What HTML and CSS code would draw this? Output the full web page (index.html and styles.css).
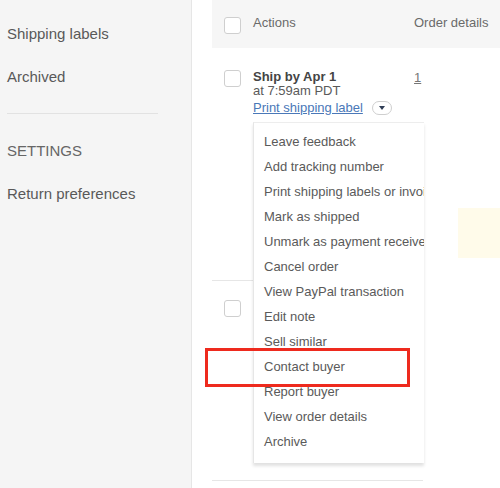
FILE: index.html
```html
<!DOCTYPE html>
<html lang="en">
<head>
  <meta charset="UTF-8" />
  <title>Orders</title>
  <link rel="stylesheet" href="styles.css">
</head>
<body>

<aside class="sidebar">
  <a class="side-link" href="#">Shipping labels</a>
  <a class="side-link" href="#">Archived</a>
  <hr class="side-divider">
  <div class="side-heading">SETTINGS</div>
  <a class="side-link" href="#">Return preferences</a>
</aside>

<main class="orders">
  <div class="orders-head">
    <span class="cell-check"><span class="checkbox"></span></span>
    <span class="cell-actions">Actions</span>
    <span class="cell-details">Order details</span>
  </div>

  <div class="order-row">
    <span class="cell-check"><span class="checkbox"></span></span>
    <div class="cell-actions">
      <div class="ship-by">Ship by Apr 1</div>
      <div class="ship-time">at 7:59am PDT</div>
      <div class="label-line">
        <a class="label-link" href="#">Print shipping label</a>
        <button class="caret-btn"><span class="caret"></span></button>
      </div>
    </div>
    <div class="cell-details"><a class="order-num" href="#">1</a></div>
  </div>

  <div class="order-row">
    <span class="cell-check"><span class="checkbox"></span></span>
    <div class="cell-actions"></div>
    <div class="cell-details"></div>
  </div>

  <div class="note"></div>

  <!-- actions menu opened from the caret -->
  <ul class="menu">
    <li>Leave feedback</li>
    <li>Add tracking number</li>
    <li>Print shipping labels or invoices</li>
    <li>Mark as shipped</li>
    <li>Unmark as payment received</li>
    <li>Cancel order</li>
    <li>View PayPal transaction</li>
    <li>Edit note</li>
    <li>Sell similar</li>
    <li>Contact buyer</li>
    <li>Report buyer</li>
    <li>View order details</li>
    <li>Archive</li>
  </ul>

  <div class="highlight"></div>
</main>

</body>
</html>
```

FILE: styles.css
```css
body {
  margin: 0;
  display: flex;
  height: 488px;
  overflow: hidden;
  font-family: 'Liberation Sans', Arial, sans-serif;
  color: #5a5a5a;
  background: #fff;
}

/* sidebar */
.sidebar {
  width: 184px;
  flex-shrink: 0;
  padding: 12px 0 0 7px;
  background: #f5f5f5;
  border-right: 1px solid #e6e6e6;
}

.side-link,
.side-heading {
  display: block;
  font-size: 15px;
  line-height: 43px;
  color: #595959;
  text-decoration: none;
}

.side-heading {
  color: #666;
}

.side-divider {
  width: 151px;
  margin: 15px 0 15px 0;
  border: none;
  border-top: 1px solid #e2e2e2;
}

/* orders table */
.orders {
  flex: 1;
  position: relative;
  padding-left: 20px;
  font-size: 13px;
}

.orders-head {
  display: flex;
  height: 48px;
  background: #f6f6f6;
  color: #6a6a6a;
  white-space: nowrap;
}

.orders-head .cell-check {
  padding-top: 17px;
}

.orders-head .cell-actions,
.orders-head .cell-details {
  padding-top: 15px;
}

.cell-check {
  width: 29px;
  padding-left: 12px;
  flex-shrink: 0;
}

.cell-actions {
  width: 161px;
  flex-shrink: 0;
}

.cell-details {
  flex: 1;
}

.checkbox {
  display: block;
  width: 15px;
  height: 15px;
  border: 1px solid #cfcfcf;
  border-radius: 3px;
  background: #fff;
}

.order-row {
  display: flex;
  width: 211px;
  height: 210px;
  padding-top: 22px;
  border-bottom: 1px solid #e6e6e6;
  overflow: hidden;
}

.order-row + .order-row {
  height: 180px;
  padding-top: 19px;
}

.ship-by {
  font-weight: bold;
  color: #444;
  line-height: 14px;
}

.ship-time {
  line-height: 13px;
}

.label-line {
  display: flex;
  align-items: center;
  gap: 9px;
  margin-top: 2px;
}

.label-link {
  color: #4a78b8;
  text-decoration: underline;
  line-height: 15px;
}

.caret-btn {
  width: 20px;
  height: 14px;
  padding: 0;
  margin-top: 2px;
  border: 1px solid #cfcfcf;
  border-radius: 7px;
  background: #fff;
  display: flex;
  align-items: center;
  justify-content: center;
}

.caret {
  width: 0;
  height: 0;
  border-left: 3px solid transparent;
  border-right: 3px solid transparent;
  border-top: 4px solid #2f3d55;
}

.order-num {
  color: #777;
  line-height: 14px;
}

/* faint note box on the far right */
.note {
  position: absolute;
  left: 266px;
  top: 208px;
  width: 50px;
  height: 50px;
  background: #fffbea;
}

.menu {
  position: absolute;
  left: 61px;
  top: 122px;
  width: 170px;
  height: 334px;
  margin: 0;
  padding: 6px 0 0 0;
  list-style: none;
  background: #fff;
  border-left: 1px solid #e6e6e6;
  border-top: 1px solid #ededed;
  box-shadow: 0 3px 3px rgba(0, 0, 0, 0.12);
  overflow: hidden;
  white-space: nowrap;
}

.menu li {
  padding-left: 10px;
  line-height: 25px;
  color: #5a5a5a;
}

.highlight {
  position: absolute;
  left: 13px;
  top: 348px;
  width: 199px;
  height: 33px;
  border: 3px solid #ee2a1e;
}
```
